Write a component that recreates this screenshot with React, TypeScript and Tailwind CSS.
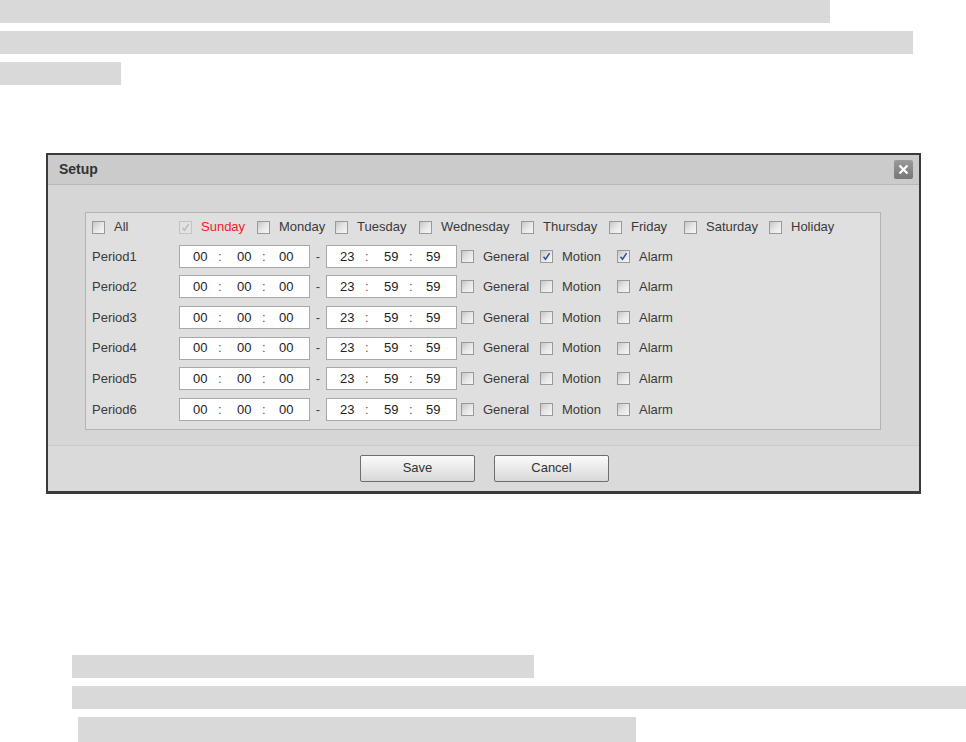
import React from 'react';

const Box: React.FC<{ checked?: boolean; disabled?: boolean }> = ({ checked, disabled }) => (
  <span
    className={`relative inline-flex h-[13px] w-[13px] shrink-0 items-center justify-center border ${
      disabled ? 'border-[#c4c4c4] bg-[#e2e2e2]' : 'border-[#999] bg-gradient-to-br from-[#c6c6c6] via-[#e6e6e6] to-[#f6f6f6]'
    }`}
  >
    {checked && (
      <svg width="9" height="9" viewBox="0 0 9 9" className="absolute">
        <path
          d="M1.5 4.8 L3.5 7.2 L7.6 1.2"
          fill="none"
          stroke={disabled ? '#bdbdbd' : '#2d4fa0'}
          strokeWidth="1.5"
        />
      </svg>
    )}
  </span>
);

const Check: React.FC<{
  label: string;
  w?: string;
  checked?: boolean;
  disabled?: boolean;
  red?: boolean;
}> = ({ label, w = '', checked, disabled, red }) => (
  <div className={`flex items-center gap-[9px] ${w}`}>
    <Box checked={checked} disabled={disabled} />
    <span className={red ? 'text-[#f0202a]' : 'text-[#3a3a3a]'}>{label}</span>
  </div>
);

const TimeBox: React.FC<{ a: string; b: string; c: string }> = ({ a, b, c }) => (
  <div className="flex h-[23px] w-[131px] items-center border border-[#a8a8a8] bg-white pl-[13px] text-[#222]">
    <span className="w-[16px]">{a}</span>
    <span className="w-[28px] pl-[9px] text-[#555]">:</span>
    <span className="w-[16px]">{b}</span>
    <span className="w-[26px] pl-[9px] text-[#555]">:</span>
    <span className="w-[16px]">{c}</span>
  </div>
);

const days = [
  { label: 'Sunday', w: 'w-[78px]', checked: true, disabled: true, red: true },
  { label: 'Monday', w: 'w-[78px]' },
  { label: 'Tuesday', w: 'w-[84px]' },
  { label: 'Wednesday', w: 'w-[102px]' },
  { label: 'Thursday', w: 'w-[88px]' },
  { label: 'Friday', w: 'w-[75px]' },
  { label: 'Saturday', w: 'w-[85px]' },
  { label: 'Holiday', w: '' },
];

const periods = [1, 2, 3, 4, 5, 6];

export default function App() {
  return (
    <div className="min-h-[742px] w-[966px] bg-white text-[13px]" style={{ fontFamily: '"Liberation Sans", Arial, sans-serif' }}>
      {/* top placeholder bars */}
      <div className="flex flex-col gap-[8px]">
        <div className="h-[23px] w-[830px] bg-[#d9d9d9]" />
        <div className="h-[23px] w-[913px] bg-[#d9d9d9]" />
        <div className="h-[23px] w-[121px] bg-[#d9d9d9]" />
      </div>

      <div className="ml-[46px] mt-[68px] w-[875px] border-2 border-b-[3px] border-[#3a3a3a]">
        <div className="flex h-[30px] items-center justify-between border-b border-[#b9b9b9] bg-[#cbcbcb] pl-[11px] pr-[6px]">
          <span className="text-[14px] font-bold text-[#333]">Setup</span>
          <div className="flex h-[19px] w-[19px] items-center justify-center rounded-[2px] bg-gradient-to-b from-[#9a9a9a] to-[#777]">
            <svg width="11" height="11" viewBox="0 0 11 11">
              <path d="M1.5 1.5 L9.5 9.5 M9.5 1.5 L1.5 9.5" stroke="#fff" strokeWidth="2.2" />
            </svg>
          </div>
        </div>

        <div className="bg-[#d6d6d6] pb-[15px] pl-[37px] pr-[38px] pt-[27px]">
          <div className="border border-[#b4b4b4] bg-[#dfdfdf] pb-[4px] pl-[6px]">
            <div className="flex h-[28px] items-center">
              <Check label="All" w="w-[87px]" />
              {days.map((d) => (
                <Check key={d.label} label={d.label} w={d.w} checked={d.checked} disabled={d.disabled} red={d.red} />
              ))}
            </div>
            {periods.map((p) => (
              <div key={p} className="flex h-[30.6px] items-center">
                <span className="w-[87px] text-[#3a3a3a]">Period{p}</span>
                <TimeBox a="00" b="00" c="00" />
                <span className="w-[16px] text-center text-[#444]">-</span>
                <TimeBox a="23" b="59" c="59" />
                <div className="ml-[4px] flex items-center">
                  <Check label="General" w="w-[79px]" />
                  <Check label="Motion" w="w-[77px]" checked={p === 1} />
                  <Check label="Alarm" checked={p === 1} />
                </div>
              </div>
            ))}
          </div>
        </div>

        <div className="flex h-[46px] items-center justify-center gap-[19px] border-t border-[#cbcbcb] bg-[#dadada] pl-[2px]">
          <button className="h-[27px] w-[115px] rounded-[2px] border border-[#6e6e6e] bg-gradient-to-b from-[#fbfbfb] to-[#d8d8d8] text-[13px] text-[#333]">
            Save
          </button>
          <button className="h-[27px] w-[115px] rounded-[2px] border border-[#6e6e6e] bg-gradient-to-b from-[#fbfbfb] to-[#d8d8d8] text-[13px] text-[#333]">
            Cancel
          </button>
        </div>
      </div>

      {/* bottom placeholder bars */}
      <div className="mt-[161px] flex flex-col gap-[8px]">
        <div className="ml-[72px] h-[23px] w-[462px] bg-[#d9d9d9]" />
        <div className="ml-[72px] h-[23px] w-[894px] bg-[#d9d9d9]" />
        <div className="ml-[78px] h-[25px] w-[558px] bg-[#d9d9d9]" />
      </div>
    </div>
  );
}
